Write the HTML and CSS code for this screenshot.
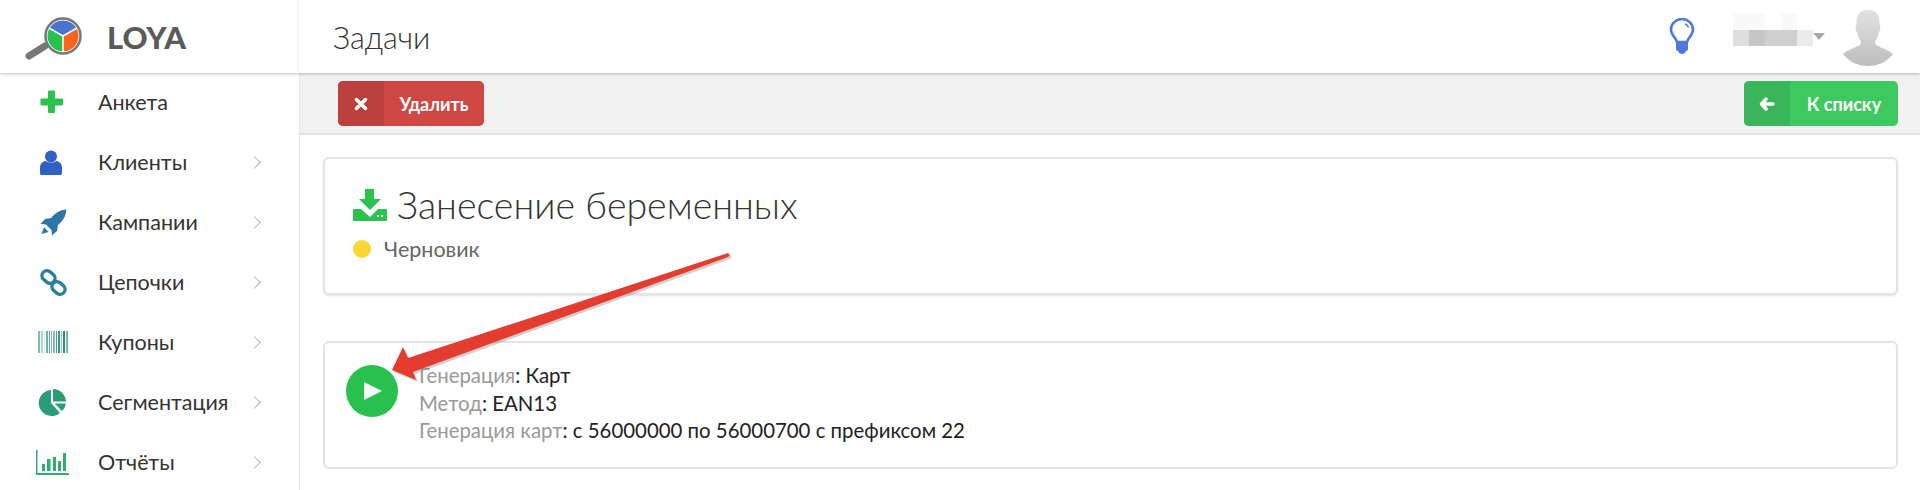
FILE: index.html
```html
<!DOCTYPE html>
<html lang="ru">
<head>
  <meta charset="UTF-8" />
  <title>Задачи</title>
  <link rel="stylesheet" href="styles.css">
</head>
<body>

<header class="topbar">
  <div class="brand">
    <svg class="brand-logo" width="66" height="50" viewBox="0 0 66 50">
      <path d="M5 43 L21 33" stroke="#777" stroke-width="7" stroke-linecap="round"/>
      <circle cx="39" cy="23" r="18" fill="#fff"/>
      <path d="M39 23 L25.500 15.200 A15.600 15.600 0 0 1 52.500 15.200 Z" fill="#4c72cf"/>
      <path d="M39 23 L39 38.600 A15.600 15.600 0 0 1 25.500 15.200 Z" fill="#27c14f"/>
      <path d="M39 23 L52.500 15.200 A15.600 15.600 0 0 1 39 38.600 Z" fill="#fb651e"/>
      <path d="M39 23 L39 39 M39 23 L25 15 M39 23 L53 15" stroke="#fff" stroke-width="1.500"/>
      <circle cx="39" cy="23" r="17.500" fill="none" stroke="#777" stroke-width="2.500"/>
    </svg>
    <span class="brand-name">LOYA</span>
  </div>
  <div class="topbar-main">
    <div class="page-name">Задачи</div>
    <div class="topbar-tools">
      <svg class="bulb" width="26" height="38" viewBox="0 0 26 38">
        <path d="M8 24 C7 20 2 17 2 11.500 A11 10.500 0 0 1 24 11.500 C24 17 19 20 18 24 Z" fill="none" stroke="#4f78d8" stroke-width="2.600"/>
        <path d="M16 6 C18 6.500 19 8 19.500 9.500" fill="none" stroke="#4f78d8" stroke-width="1.500"/>
        <path d="M7 24 H19 V31 Q19 33 17 33 Q16 36 13 36 Q10 36 9 33 Q7 33 7 31 Z" fill="#4f78d8"/>
      </svg>
      <div class="user-name">
        <div class="blur-row"><i class="b1 w32"></i><i class="b0 w16"></i><i class="b1 w16"></i></div>
        <div class="blur-row"><i class="b2 w16"></i><i class="b3 w16"></i><i class="b4 w32"></i><i class="b5 w16"></i></div>
      </div>
      <span class="caret"></span>
      <svg class="avatar" width="50" height="56" viewBox="0 0 50 56">
        <defs>
          <linearGradient id="avatarFill" x1="0" y1="0" x2="0" y2="1">
            <stop offset="0" stop-color="#e2e2e2"/>
            <stop offset="1" stop-color="#bdbdbd"/>
          </linearGradient>
        </defs>
        <path d="M25 0 C35 0 37 7 36.500 14 C38 15 37.500 21 35.500 23 C35 27 33 30 32 32 L33 35 C40 39 46 40 50 44 C44 52 35 56 25 56 C15 56 6 52 0 44 C4 40 10 39 17 35 L18 32 C17 30 15 27 14.500 23 C12.500 21 12 15 13.500 14 C13 7 15 0 25 0 Z" fill="url(#avatarFill)"/>
      </svg>
    </div>
  </div>
</header>

<div class="layout">
  <nav class="sidebar">
    <a class="nav-item">
      <span class="nav-icon">
        <svg width="24" height="24" viewBox="0 0 24 24"><path d="M8 1.500 Q8 0.500 9 0.500 H14 Q15 0.500 15 1.500 V8.500 H22 Q23 8.500 23 9.500 V14.500 Q23 15.500 22 15.500 H15 V22 Q15 23 14 23 H9 Q8 23 8 22 V15.500 H1.500 Q0.500 15.500 0.500 14.500 V9.500 Q0.500 8.500 1.500 8.500 H8 Z" fill="#2bc24e"/></svg>
      </span>
      <span class="nav-label">Анкета</span>
    </a>
    <a class="nav-item">
      <span class="nav-icon">
        <svg width="22" height="25" viewBox="0 0 22 25"><circle cx="11" cy="6.500" r="6" fill="#325fc4"/><path d="M1 25 Q0 25 0 23 V17.500 C0 13 4 11 6 11 C8 13 14 13 16 11 C18 11 22 13 22 17.500 V23 Q22 25 21 25 Z" fill="#325fc4"/></svg>
      </span>
      <span class="nav-label">Клиенты</span>
      <span class="chevron"></span>
    </a>
    <a class="nav-item">
      <span class="nav-icon">
        <svg width="27" height="27" viewBox="0 0 27 27"><path d="M26.500 0.500 C20 1 15 4 11 9 L5 10 L0.500 15 L6 15.500 L11.500 21 L12 26.500 L17 22 L18 16 C23 12 26 7 26.500 0.500 Z" fill="#2f76a8"/><path d="M4 18 L1.500 25 L8.500 23 Z" fill="#2f76a8"/></svg>
      </span>
      <span class="nav-label">Кампании</span>
      <span class="chevron"></span>
    </a>
    <a class="nav-item">
      <span class="nav-icon">
        <svg width="27" height="27" viewBox="0 0 27 27" fill="none" stroke="#2b7f9e" stroke-width="3.400"><rect x="1.500" y="3" width="14" height="10" rx="5" transform="rotate(40 8.500 8)"/><rect x="11.500" y="14" width="14" height="10" rx="5" transform="rotate(40 18.500 19)"/></svg>
      </span>
      <span class="nav-label">Цепочки</span>
      <span class="chevron"></span>
    </a>
    <a class="nav-item">
      <span class="nav-icon icon-wide">
        <svg width="30" height="22" viewBox="0 0 30 22">
          <rect x="0" y="0" width="2" height="22" fill="#7fbdb4"/><rect x="3" y="0" width="2" height="22" fill="#a9d4ce"/><rect x="6" y="0" width="1" height="22" fill="#d3e9e6"/><rect x="8" y="0" width="2" height="22" fill="#6fb3a9"/><rect x="11" y="0" width="1" height="22" fill="#5aa89d"/><rect x="13" y="0" width="1" height="22" fill="#85c0b7"/><rect x="15" y="0" width="2" height="22" fill="#7dbbb2"/><rect x="18" y="0" width="1" height="22" fill="#4e9e92"/><rect x="20" y="0" width="2" height="22" fill="#3c9386"/><rect x="23" y="0" width="1" height="22" fill="#8cc4bc"/><rect x="25" y="0" width="2" height="22" fill="#2f8a7c"/><rect x="28" y="0" width="2" height="22" fill="#79b8af"/>
        </svg>
      </span>
      <span class="nav-label">Купоны</span>
      <span class="chevron"></span>
    </a>
    <a class="nav-item">
      <span class="nav-icon icon-wide">
        <svg width="28" height="27" viewBox="0 0 28 27"><path d="M13 1 A13 13 0 1 0 22 24 L13 14 Z" fill="#2a9d78"/><path d="M15 0 A13 13 0 0 1 28 12.500 H15 Z" fill="#2a9d78"/><path d="M16.500 14.500 H28 A13 13 0 0 1 24 22 Z" fill="#2a9d78"/></svg>
      </span>
      <span class="nav-label">Сегментация</span>
      <span class="chevron"></span>
    </a>
    <a class="nav-item">
      <span class="nav-icon icon-wider">
        <svg width="33" height="25" viewBox="0 0 33 25" fill="#2fae6d"><rect x="0" y="0" width="1.500" height="25"/><rect x="0" y="23" width="33" height="2"/><rect x="6" y="14" width="3" height="7"/><rect x="11" y="9" width="3.500" height="12"/><rect x="17" y="7" width="3" height="14"/><rect x="22" y="11" width="3" height="10"/><rect x="27" y="3" width="3" height="18"/></svg>
      </span>
      <span class="nav-label">Отчёты</span>
      <span class="chevron"></span>
    </a>
  </nav>

  <main class="content">
    <div class="toolbar">
      <a class="btn btn-red">
        <span class="btn-icon">
          <svg width="14" height="14" viewBox="0 0 14 14"><path d="M2.500 2.500 L11.500 11.500 M11.500 2.500 L2.500 11.500" stroke="#fff" stroke-width="3.500" stroke-linecap="round"/></svg>
        </span>
        <span class="btn-text">Удалить</span>
      </a>
      <a class="btn btn-green">
        <span class="btn-icon">
          <svg width="16" height="14" viewBox="0 0 16 14"><path d="M7 2 L2.500 7 L7 12 M3 7 H14" fill="none" stroke="#fff" stroke-width="3.500" stroke-linecap="round" stroke-linejoin="round"/></svg>
        </span>
        <span class="btn-text">К списку</span>
      </a>
    </div>

    <div class="cards">
      <section class="card card-title">
        <h1 class="task-title">
          <svg width="34" height="32" viewBox="0 0 34 32"><path d="M12 0 H21 V10 H28 L17 21 L6 10 H12 Z" fill="#2bc24e"/><path d="M1 20 H8 L17 28 L25 20 H33 Q34 20 34 21 V31 Q34 32 33 32 H1 Q0 32 0 31 V21 Q0 20 1 20 Z" fill="#2bc24e"/><rect x="24" y="26" width="2" height="2" fill="#fff"/><rect x="28" y="26" width="2" height="2" fill="#fff"/></svg>
          Занесение беременных
        </h1>
        <div class="task-status"><span class="status-dot"></span>Черновик</div>
      </section>

      <section class="card card-step">
        <span class="play-btn"><span class="play-tri"></span></span>
        <div class="step-info">
          <div><span class="muted">Генерация</span>: Карт</div>
          <div><span class="muted">Метод</span>: EAN13</div>
          <div><span class="muted">Генерация карт</span>: с 56000000 по 56000700 с префиксом 22</div>
        </div>
      </section>
    </div>
  </main>
</div>

<!-- стрелка поверх скриншота -->
<svg class="arrow" width="360" height="150" viewBox="0 0 360 150">
  <path d="M347 8 Q350 10 347 12 L32 127 L35 135 L11 125 L22 102 L27 113 Z" fill="#8a8a8a" opacity="0.4" transform="translate(2 2)"/>
  <path d="M347 8 Q350 10 347 12 L32 127 L35 135 L11 125 L22 102 L27 113 Z" fill="#e53c30"/>
</svg>

</body>
</html>
```

FILE: styles.css
```css
* { box-sizing: border-box; }
html, body { margin: 0; padding: 0; height: 490px; overflow: hidden; }
body { font-family: "Lato", "Open Sans", sans-serif; background: #fff; color: #333; position: relative; }

.topbar { display: flex; height: 73px; background: #fff; box-shadow: 0 1px 3px rgba(0,0,0,.25); position: relative; }
.brand { width: 299px; display: flex; align-items: center; padding-left: 24px; border-right: 1px solid #f2f2f2; }
.brand-logo { display: block; margin-top: 2px; }
.brand-name { margin-left: 17px; font-weight: 900; font-size: 31px; color: #5b5b5b; }
.topbar-main { flex: 1; display: flex; align-items: center; justify-content: space-between; padding: 0 27px 0 34px; }
.page-name { font-size: 30.500px; font-weight: 300; color: #333; }
.topbar-tools { display: flex; align-items: center; }
.bulb { margin-right: 38px; }
.user-name { width: 80px; margin-top: -13px; }
.blur-row { display: flex; height: 16px; }
.blur-row i { display: block; height: 16px; }
.w16 { width: 16px; }
.w32 { width: 32px; }
.b0 { background: #fff; }
.b1 { background: #f9f9f9; }
.b2 { background: #dedede; }
.b3 { background: #c6c6c6; }
.b4 { background: #cfcfcf; }
.b5 { background: #ebebeb; }
.caret { width: 0; height: 0; margin: 0 18px 0 0; border: 6px solid transparent; border-top: 7px solid #a9a9a9; border-bottom: 0; }
.avatar { display: block; margin-top: 2px; }

.layout { display: flex; height: 417px; }
.sidebar { width: 300px; margin-top: -1px; border-right: 1px solid #e6e6e6; }
.nav-item { display: flex; align-items: center; height: 60px; color: #333; }
.nav-icon { width: 98px; padding-left: 40px; display: flex; align-items: center; }
.icon-wide { padding-left: 38px; }
.icon-wider { padding-left: 36px; }
.nav-icon svg { display: block; }
.nav-label { width: 155px; font-size: 21.500px; }
.chevron { width: 9px; height: 9px; margin-left: -3px; border-top: 1px solid #b5b5b5; border-right: 1px solid #b5b5b5; transform: rotate(45deg); }

.content { flex: 1; }
.toolbar { height: 62px; display: flex; justify-content: space-between; padding: 8px 22px 0 38px; background: #f1f1f1; border-bottom: 2px solid #e2e2e2; }
.btn { display: flex; height: 45px; border-radius: 5px; color: #fff; font-size: 18px; font-weight: 700; overflow: hidden; }
.btn-red { width: 146px; background: #cf4643; }
.btn-green { width: 154px; background: #3dc960; }
.btn-icon { width: 46px; display: flex; align-items: center; justify-content: center; }
.btn-text { flex: 1; display: flex; align-items: center; justify-content: center; }
.btn-red .btn-icon { background: #bb403e; }
.btn-green .btn-icon { background: #39b55a; }

.cards { padding: 22px 22px 0 23px; }
.card { background: #fff; border: 2px solid #e4e4e4; border-radius: 6px; }
.card-title { height: 138px; padding: 23px 28px; margin-bottom: 46px; box-shadow: 0 1px 2px rgba(0,0,0,.12); }
.task-title { display: flex; align-items: center; gap: 10px; margin: 0; font-size: 37.500px; font-weight: 300; color: #333; line-height: 46px; }
.task-status { display: flex; align-items: center; gap: 13px; margin-top: 8px; font-size: 21.500px; color: #666; }
.status-dot { width: 18px; height: 18px; border-radius: 50%; background: #fdd531; }
.card-step { height: 128px; display: flex; padding: 22px 21px; }
.play-btn { width: 52px; height: 52px; border-radius: 50%; background: #29c14d; display: flex; align-items: center; justify-content: center; flex-shrink: 0; }
.play-tri { width: 0; height: 0; margin-left: 1px; border-left: 18px solid #f4fbf5; border-top: 9.500px solid transparent; border-bottom: 9.500px solid transparent; }
.step-info { margin: -3px 0 0 21px; font-size: 20.400px; line-height: 27.500px; color: #222; }
.muted { color: #999; }

.arrow { position: absolute; left: 381px; top: 245px; pointer-events: none; }
```
